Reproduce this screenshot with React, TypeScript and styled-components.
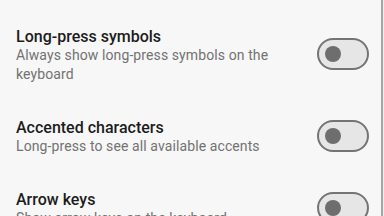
import React, { useState } from "react";
import styled, { createGlobalStyle } from "styled-components";

const GlobalStyle = createGlobalStyle`
  html, body {
    margin: 0;
    padding: 0;
    background: #f7f7f7;
    font-family: Roboto, "Noto Sans", sans-serif;
    overflow: hidden;
  }
`;

const Screen = styled.div`
  display: flex;
  width: 384px;
  height: 216px;
  background: #f7f7f7;
  overflow: hidden;
`;

const SettingsList = styled.div`
  flex: 1;
  display: flex;
  flex-direction: column;
  padding-top: 10px;
`;

const ScrollTrack = styled.div`
  width: 3px;
  display: flex;
  background: #ededed;
`;

const ScrollThumb = styled.div`
  width: 2px;
  height: 100%;
  background: #a6a6a6;
`;

const Row = styled.div`
  display: flex;
  align-items: center;
  gap: 24px;
  padding: 16px 12px 17px 16px;
`;

const TextBlock = styled.div`
  flex: 1;
  display: flex;
  flex-direction: column;
  margin-top: 1px;
`;

const Title = styled.div`
  font-size: 16px;
  line-height: 19px;
  font-weight: 500;
  color: #1c1c1c;
`;

const Summary = styled.div`
  font-size: 14px;
  line-height: 19px;
  letter-spacing: 0.1px;
  color: #727272;
`;

const SwitchTrack = styled.button<{ $on: boolean }>`
  flex: none;
  width: 52px;
  height: 32px;
  box-sizing: border-box;
  border-radius: 16px;
  border: 2px solid ${(p) => (p.$on ? "#3f51b5" : "#747474")};
  background: ${(p) => (p.$on ? "#3f51b5" : "#e6e6e6")};
  padding: 0 6px;
  margin-bottom: 2px;
  display: flex;
  align-items: center;
  justify-content: ${(p) => (p.$on ? "flex-end" : "flex-start")};
  cursor: pointer;
`;

const SwitchThumb = styled.span<{ $on: boolean }>`
  width: 16px;
  height: 16px;
  border-radius: 50%;
  background: ${(p) => (p.$on ? "#fff" : "#6e6e6e")};
`;

const settings = [
  {
    id: 1,
    title: "Long-press symbols",
    summary: "Always show long-press symbols on the keyboard",
  },
  {
    id: 2,
    title: "Accented characters",
    summary: "Long-press to see all available accents",
  },
  {
    id: 3,
    title: "Arrow keys",
    summary: "Show arrow keys on the keyboard",
  },
];

const App: React.FC = () => {
  const [enabled, setEnabled] = useState<Record<number, boolean>>({});

  return (
    <Screen>
      <GlobalStyle />
      <SettingsList>
        {settings.map((item) => (
          <Row key={item.id}>
            <TextBlock>
              <Title>{item.title}</Title>
              <Summary>{item.summary}</Summary>
            </TextBlock>
            <SwitchTrack
              $on={!!enabled[item.id]}
              onClick={() =>
                setEnabled((prev) => ({ ...prev, [item.id]: !prev[item.id] }))
              }
            >
              <SwitchThumb $on={!!enabled[item.id]} />
            </SwitchTrack>
          </Row>
        ))}
      </SettingsList>
      <ScrollTrack>
        <ScrollThumb />
      </ScrollTrack>
    </Screen>
  );
};

export default App;
